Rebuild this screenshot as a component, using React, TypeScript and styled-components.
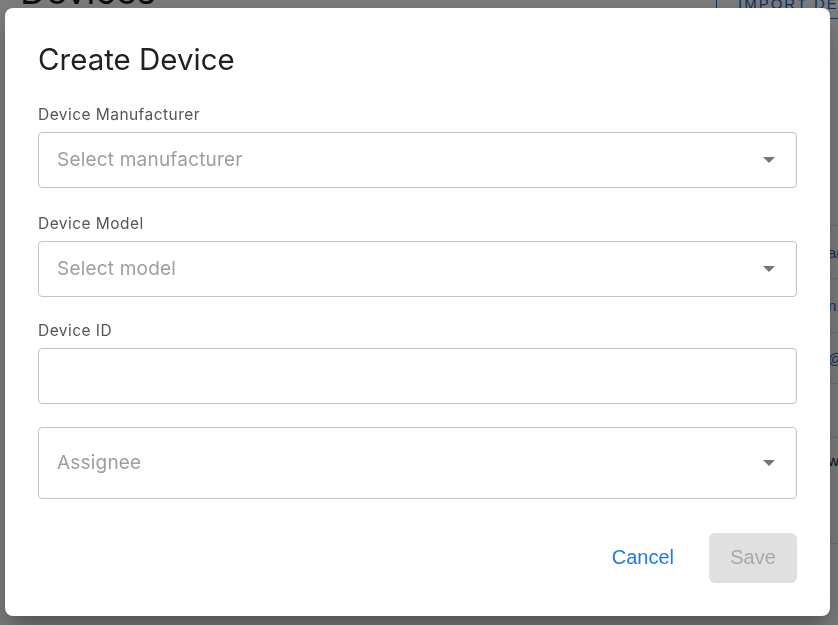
import React from "react";
import styled, { createGlobalStyle } from "styled-components";

const GlobalStyle = createGlobalStyle`
    html, body {
        margin: 0;
        padding: 0;
        background: #ffffff;
        overflow: hidden;
        font-family: Inter, "Noto Sans", sans-serif;
    }
`;

// page behind the dialog (scrolled a little, so the heading is cut off)
const Page = styled.div`
    width: 838px;
    height: 625px;
    overflow: hidden;
`;

const PageHeader = styled.div`
    display: flex;
    align-items: flex-end;
    justify-content: space-between;
    margin-top: -32px;
    padding: 0 0 0 20px;
    height: 51px;
`;

const PageTitle = styled.h1`
    margin: 0;
    font-size: 36px;
    font-weight: 400;
    line-height: 1;
    color: #1b1b1b;
    padding-bottom: 10px;
`;

const ImportButton = styled.button`
    height: 40px;
    width: 150px;
    margin-right: -28px;
    border: 1px solid #1565c0;
    border-radius: 4px;
    background: transparent;
    color: #1565c0;
    font-family: "Liberation Sans", Arial, sans-serif;
    font-size: 15px;
    letter-spacing: 2px;
    white-space: nowrap;
    text-align: left;
    padding: 8px 0 0 21px;
`;

const Table = styled.div`
    margin-top: 206px;
    margin-left: 20px;
    width: 900px;
`;

const Row = styled.div<{ $h: number }>`
    display: grid;
    grid-template-columns: 808px 1fr;
    height: ${(p) => p.$h}px;
    border-top: 1px solid #dddddd;
    box-sizing: border-box;
    align-items: center;
    font-family: "Liberation Sans", Arial, sans-serif;
    font-size: 15px;
`;

const Cell = styled.span<{ $link?: boolean; $top?: boolean }>`
    color: ${(p) => (p.$link ? "#1565c0" : "#222")};
    align-self: ${(p) => (p.$top ? "start" : "center")};
    padding-top: ${(p) => (p.$top ? "14px" : "0")};
    white-space: nowrap;
`;

// modal
const Backdrop = styled.div`
    position: fixed;
    inset: 0;
    background: rgba(0, 0, 0, 0.5);
    display: flex;
    align-items: center;
    justify-content: center;
`;

const Dialog = styled.div`
    width: 825px;
    box-sizing: border-box;
    background: #ffffff;
    border-radius: 8px;
    padding: 33px;
    margin: 0 0 2px -3px;
    box-shadow: 0 11px 15px -7px rgba(0, 0, 0, 0.2), 0 24px 38px 3px rgba(0, 0, 0, 0.14),
        0 9px 46px 8px rgba(0, 0, 0, 0.12);
`;

const Title = styled.h2`
    margin: 0;
    font-size: 29.5px;
    line-height: 36px;
    font-weight: 400;
    color: #202124;
`;

const Field = styled.div<{ $gap: number }>`
    display: flex;
    flex-direction: column;
    margin-top: ${(p) => p.$gap}px;
`;

const Label = styled.label`
    font-size: 15.5px;
    line-height: 20px;
    letter-spacing: 0.45px;
    color: #555555;
    margin-bottom: 7px;
`;

const Box = styled.div<{ $h: number }>`
    display: flex;
    align-items: center;
    justify-content: space-between;
    height: ${(p) => p.$h}px;
    box-sizing: border-box;
    border: 1px solid #c4c4c4;
    border-radius: 4px;
    padding: 0 21px 0 18px;
`;

const Placeholder = styled.span`
    font-size: 19px;
    letter-spacing: 0.2px;
    color: #9e9e9e;
`;

const Actions = styled.div`
    display: flex;
    justify-content: flex-end;
    align-items: center;
    gap: 35px;
    margin-top: 34px;
`;

const TextButton = styled.button`
    border: none;
    background: transparent;
    padding: 0;
    font-family: "Liberation Sans", Arial, sans-serif;
    font-size: 20px;
    color: #1e7be6;
    cursor: pointer;
`;

const SaveButton = styled.button`
    width: 88px;
    height: 50px;
    border: none;
    border-radius: 6px;
    background: #e0e0e0;
    font-family: "Liberation Sans", Arial, sans-serif;
    font-size: 20px;
    color: #a8a8a8;
`;

const Arrow = () => (
    <svg width="12" height="6" viewBox="0 0 12 6">
        <polygon points="0,0 12,0 6,6" fill="#757575" />
    </svg>
);

const rows = [
    { h: 53, text: "anastasia.k", link: true },
    { h: 54, text: "n1-sensor", link: true },
    { h: 51, text: "@example.com", link: true },
    { h: 54, text: "", link: false },
    { h: 106, text: "warehouse", link: false, top: true },
];

const App = () => {
    return (
        <>
            <GlobalStyle />
            <Page>
                <PageHeader>
                    <PageTitle>Devices</PageTitle>
                    <ImportButton>IMPORT DEVICES</ImportButton>
                </PageHeader>
                <Table>
                    {rows.map((r, i) => (
                        <Row key={i} $h={r.h}>
                            <span />
                            <Cell $link={r.link} $top={r.top}>{r.text}</Cell>
                        </Row>
                    ))}
                    <Row $h={40} />
                </Table>
            </Page>

            <Backdrop>
                <Dialog>
                    <Title>Create Device</Title>

                    <Field $gap={28}>
                        <Label>Device Manufacturer</Label>
                        <Box $h={56}>
                            <Placeholder>Select manufacturer</Placeholder>
                            <Arrow />
                        </Box>
                    </Field>

                    <Field $gap={26}>
                        <Label>Device Model</Label>
                        <Box $h={56}>
                            <Placeholder>Select model</Placeholder>
                            <Arrow />
                        </Box>
                    </Field>

                    <Field $gap={24}>
                        <Label>Device ID</Label>
                        <Box $h={56} />
                    </Field>

                    <Field $gap={23}>
                        <Box $h={72}>
                            <Placeholder>Assignee</Placeholder>
                            <Arrow />
                        </Box>
                    </Field>

                    <Actions>
                        <TextButton>Cancel</TextButton>
                        <SaveButton>Save</SaveButton>
                    </Actions>
                </Dialog>
            </Backdrop>
        </>
    );
};

export default App;
